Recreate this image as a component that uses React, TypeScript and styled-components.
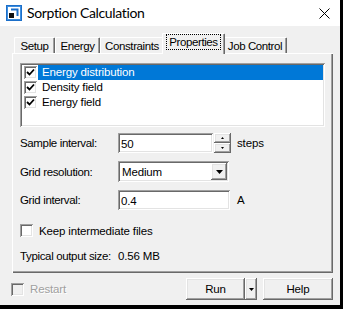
import React from 'react';
import styled, { createGlobalStyle, css } from 'styled-components';

const Global = createGlobalStyle`
  html, body { margin: 0; padding: 0; background: #000; }
  body { font-family: "Liberation Sans", Arial, sans-serif; font-size: 11px; letter-spacing: -0.15px; color: #000; }
  * { box-sizing: border-box; }
`;

const sunken = css`
  box-shadow: inset 1px 1px #a0a0a0, inset -1px -1px #fff, inset 2px 2px #696969, inset -2px -2px #e3e3e3;
`;
const raised = css`
  box-shadow: inset -1px -1px #696969, inset 1px 1px #fff, inset -2px -2px #a0a0a0, inset 2px 2px #e3e3e3;
`;

const Page = styled.div`
  display: flex;
  width: 343px;
  height: 309px;
  background: #000;
`;

const Window = styled.div`
  width: 340px;
  height: 305px;
  background: #f0f0f0;
  display: flex;
  flex-direction: column;
`;

const TitleBar = styled.div`
  height: 26px;
  background: #fff;
  display: flex;
  align-items: center;
  gap: 5px;
  padding: 0 10px 0 6px;
`;

const Title = styled.div`
  flex: 1;
  font-family: Lato, "Noto Sans", sans-serif;
  font-size: 14px;
  letter-spacing: -0.35px;
  color: #000;
  line-height: 26px;
`;

const Body = styled.div`
  flex: 1;
  display: flex;
  flex-direction: column;
  padding: 7px 7px 0 12px;
`;

const TabStrip = styled.div`
  display: flex;
  align-items: flex-end;
  height: 20px;
  padding-left: 2px;
  position: relative;
  z-index: 1;
`;

const Tab = styled.div<{ $w: number; $active?: boolean }>`
  width: ${p => p.$w}px;
  height: 16px;
  display: flex;
  align-items: center;
  justify-content: center;
  padding-top: 1px;
  background: #f0f0f0;
  box-shadow: inset 1px 1px #fff, inset -1px 0 #696969, inset -2px 0 #a0a0a0;
  border-top-left-radius: 1px;
  border-top-right-radius: 1px;
  white-space: nowrap;
  font-size: 11.5px;
  letter-spacing: -0.4px;
  ${p => p.$active && css`
    width: ${p.$w + 4}px;
    height: 21px;
    margin: 0 -2px -1px;
    padding-top: 0;
    padding-bottom: 3px;
    position: relative;
    z-index: 2;
  `}
`;

const FocusLabel = styled.span`
  outline: 1px dotted #000;
  outline-offset: 1px;
  padding: 0 1px;
`;

const Panel = styled.div`
  height: 220px;
  display: flex;
  flex-direction: column;
  padding: 10px 8px 0 8px;
  background: #f0f0f0;
  box-shadow: inset 1px 1px #fff, inset -1px -1px #696969, inset -2px -2px #a0a0a0;
`;

const ListBox = styled.div`
  height: 64px;
  background: #fff;
  padding: 2px;
  ${sunken};
  display: flex;
  flex-direction: column;
`;

const ListRow = styled.div`
  display: flex;
  align-items: center;
  height: 15px;
  padding-left: 2px;
`;

const ListLabel = styled.div<{ $selected?: boolean }>`
  flex: 1;
  height: 15px;
  line-height: 15px;
  margin-left: 1px;
  padding-left: 4px;
  font-size: 11.5px;
  ${p => p.$selected && css`
    background: #0078d7;
    color: #fff;
  `}
`;

const Box = styled.div<{ $disabled?: boolean }>`
  width: 13px;
  height: 13px;
  flex: none;
  background: ${p => (p.$disabled ? '#f0f0f0' : '#fff')};
  ${sunken};
  display: flex;
  align-items: center;
  justify-content: center;
`;

const FormGrid = styled.div`
  display: grid;
  grid-template-columns: 98px auto 1fr;
  grid-template-rows: 20px 21px 20px;
  row-gap: 8px;
  align-items: center;
  margin-top: 6px;
  font-size: 11.5px;
`;

const Label = styled.div`
  font-size: 11.5px;
  letter-spacing: -0.35px;
`;

const Unit = styled.div`
  margin-left: 6px;
  font-size: 11.5px;
`;

const Field = styled.div<{ $w: number }>`
  width: ${p => p.$w}px;
  height: 20px;
  background: #fff;
  ${sunken};
  padding: 2px 4px 0 3px;
  line-height: 16px;
  font-size: 11.5px;
  display: flex;
  align-items: center;
`;

const SpinGroup = styled.div`
  display: flex;
  gap: 1px;
`;

const Spinner = styled.div`
  display: flex;
  flex-direction: column;
  width: 17px;
  height: 20px;
`;

const SpinBtn = styled.div`
  flex: 1;
  background: #f0f0f0;
  ${raised};
  display: flex;
  align-items: center;
  justify-content: center;
`;

const Combo = styled.div<{ $w: number }>`
  width: ${p => p.$w}px;
  height: 21px;
  background: #fff;
  ${sunken};
  padding: 2px;
  display: flex;
  align-items: stretch;
`;

const ComboText = styled.div`
  flex: 1;
  padding-left: 2px;
  display: flex;
  align-items: center;
  font-size: 11.5px;
`;

const ComboBtn = styled.div`
  width: 16px;
  background: #f0f0f0;
  ${raised};
  display: flex;
  align-items: center;
  justify-content: center;
`;

const CheckRow = styled.div`
  display: flex;
  align-items: center;
  gap: 6px;
  margin-top: 14px;
  height: 13px;
  font-size: 11.5px;
`;

const SummaryRow = styled.div`
  display: grid;
  grid-template-columns: 98px auto;
  margin-top: 12px;
  height: 14px;
  align-items: center;
  font-size: 11.5px;
  white-space: nowrap;
`;

const Footer = styled.div`
  display: flex;
  align-items: center;
  height: 22px;
  margin-top: 5px;
  margin-left: -1px;
`;

const Disabled = styled.div`
  margin-left: 6px;
  font-size: 11.5px;
  color: #a0a0a0;
  text-shadow: 1px 1px #fff;
`;

const Spacer = styled.div`
  flex: 1;
`;

const Button = styled.div<{ $w: number }>`
  width: ${p => p.$w}px;
  height: 22px;
  background: #f0f0f0;
  ${raised};
  display: flex;
  align-items: center;
  justify-content: center;
  font-size: 11.5px;
`;

const Gap = styled.div<{ $w: number }>`
  width: ${p => p.$w}px;
`;

const Icon = () => (
  <svg width="16" height="16" viewBox="0 0 16 16">
    <rect x="0.5" y="0.5" width="15" height="15" fill="#fff" stroke="#1c6fc9" />
    <rect x="1.5" y="1.5" width="13" height="13" fill="none" stroke="#3d8ee0" />
    <path d="M5 4.5 H11.5 V11" fill="none" stroke="#1c6fc9" strokeWidth="2" />
    <rect x="3" y="8" width="5" height="5" fill="#111" />
  </svg>
);

const CloseX = () => (
  <svg width="11" height="11" viewBox="0 0 11 11">
    <path d="M0.5 0.5 L10.5 10.5 M10.5 0.5 L0.5 10.5" stroke="#000" strokeWidth="1" />
  </svg>
);

const Check = () => (
  <svg width="9" height="9" viewBox="0 0 9 9">
    <path d="M1 4 L3.5 6.5 L8 1.5" fill="none" stroke="#000" strokeWidth="1.8" />
  </svg>
);

const Tri = ({ w, h, up }: { w: number; h: number; up?: boolean }) => (
  <svg width={w} height={h} viewBox={`0 0 ${w} ${h}`}>
    <polygon points={up ? `0,${h} ${w},${h} ${w / 2},0` : `0,0 ${w},0 ${w / 2},${h}`} fill="#000" />
  </svg>
);

const tabs = [
  { label: 'Setup', w: 41 },
  { label: 'Energy', w: 45 },
  { label: 'Constraints', w: 64 },
  { label: 'Properties', w: 59, active: true },
  { label: 'Job Control', w: 64 },
];

const items = [
  { label: 'Energy distribution', selected: true },
  { label: 'Density field' },
  { label: 'Energy field' },
];

export default function App() {
  return (
    <Page>
      <Global />
      <Window>
        <TitleBar>
          <Icon />
          <Title>Sorption Calculation</Title>
          <CloseX />
        </TitleBar>
        <Body>
          <TabStrip>
            {tabs.map(t => (
              <Tab key={t.label} $w={t.w} $active={t.active}>
                {t.active ? <FocusLabel>{t.label}</FocusLabel> : t.label}
              </Tab>
            ))}
          </TabStrip>
          <Panel>
            <ListBox>
              {items.map(it => (
                <ListRow key={it.label}>
                  <Box><Check /></Box>
                  <ListLabel $selected={it.selected}>{it.label}</ListLabel>
                </ListRow>
              ))}
            </ListBox>
            <FormGrid>
              <Label>Sample interval:</Label>
              <SpinGroup>
                <Field $w={95}>50</Field>
                <Spinner>
                  <SpinBtn><Tri w={3} h={2} up /></SpinBtn>
                  <SpinBtn><Tri w={3} h={2} /></SpinBtn>
                </Spinner>
              </SpinGroup>
              <Unit>steps</Unit>
              <Label>Grid resolution:</Label>
              <Combo $w={111}>
                <ComboText>Medium</ComboText>
                <ComboBtn><Tri w={7} h={4} /></ComboBtn>
              </Combo>
              <div />
              <Label>Grid interval:</Label>
              <Field $w={112}>0.4</Field>
              <Unit>A</Unit>
            </FormGrid>
            <CheckRow>
              <Box />
              <span>Keep intermediate files</span>
            </CheckRow>
            <SummaryRow>
              <Label>Typical output size:</Label>
              <span>0.56 MB</span>
            </SummaryRow>
          </Panel>
          <Footer>
            <Box $disabled />
            <Disabled>Restart</Disabled>
            <Spacer />
            <Button $w={59}>Run</Button>
            <Button $w={12}><Tri w={5} h={3} /></Button>
            <Gap $w={6} />
            <Button $w={70}>Help</Button>
          </Footer>
        </Body>
      </Window>
    </Page>
  );
}
